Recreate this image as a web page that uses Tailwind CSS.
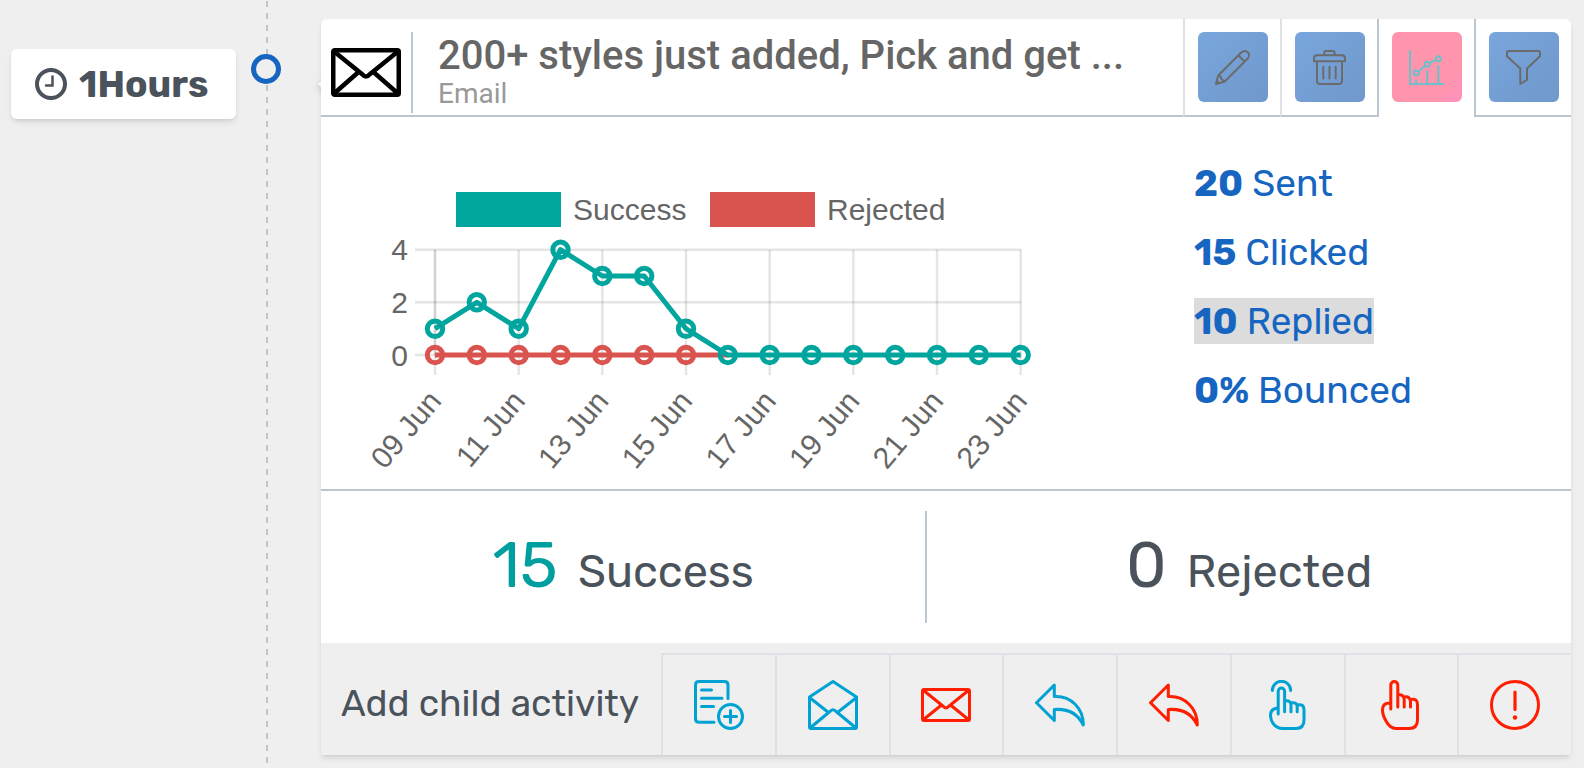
<!DOCTYPE html>
<html lang="en">
<head>
<meta charset="utf-8">
<meta name="viewport" content="width=device-width, initial-scale=1">
<title>Campaign activity</title>
<script src="https://cdn.jsdelivr.net/npm/@tailwindcss/browser@4"></script>
</head>
<body class="bg-[#efefef] font-['Rubik','Roboto',sans-serif] text-[#495057]">
<div class="flex min-h-screen items-stretch">

  <!-- Delay badge -->
  <aside class="shrink-0 pt-[49px] pl-[11px]">
    <div class="flex h-[70px] w-[225px] items-center gap-3 rounded-md bg-white pl-6 shadow-md">
      <svg class="size-8 shrink-0" viewBox="0 0 32 32" fill="none" stroke="#4a525b" aria-hidden="true">
        <circle cx="16" cy="16" r="14" stroke-width="4"/>
        <path d="M17.500 8.500V17.500H11" stroke-width="2.500" stroke-linecap="round"/>
      </svg>
      <span class="text-[37px] leading-none font-bold whitespace-nowrap text-[#4a525b]">1Hours</span>
    </div>
  </aside>

  <!-- Timeline -->
  <div class="relative ml-[15px] flex w-[30px] shrink-0 justify-center pl-0.5">
    <div class="w-0.5 bg-[repeating-linear-gradient(to_bottom,transparent_0,transparent_1px,#bcc6d0_1px,#bcc6d0_7px,transparent_7px,transparent_12px)]"></div>
    <div class="absolute top-[54px] left-0 size-[30px] rounded-full border-5 border-[#1665c1] bg-[#efefef]"></div>
  </div>

  <main class="relative mt-[19px] mr-[13px] ml-10 min-w-0 flex-1">
    <div class="absolute top-[50px] left-[3px] size-[30px] rotate-45 bg-white shadow-md"></div>
    <article class="relative rounded-t-md bg-white shadow-md">

      <!-- Header -->
      <header class="flex h-[98px]">
        <div class="flex min-w-0 flex-1 border-b-2 border-[#bcc6d0]">
          <div class="mt-[13px] flex h-[81px] w-[92px] shrink-0 items-center border-r-2 border-[#bcc6d0] pl-2.5">
            <svg class="w-[70px]" viewBox="0 0 70 49" fill="none" stroke="#000" stroke-width="4.500" stroke-linejoin="round" aria-hidden="true">
              <rect x="2.250" y="2.250" width="65.500" height="44.500" rx="1.500"/>
              <path d="M2.500 3L31.500 26.500Q35 30.500 38.500 26.500L67.500 3M2.500 46L27 24.500M67.500 46L43 24.500"/>
            </svg>
          </div>
          <div class="min-w-0 pt-3.5 pl-[25px] font-['Roboto',sans-serif]">
            <h1 class="truncate text-[40px] leading-[46px] font-medium text-[#666]">200+ styles just added, Pick and get ...</h1>
            <p class="text-[28px] leading-[30px] text-[#999]">Email</p>
          </div>
        </div>
        <nav class="flex shrink-0" aria-label="Activity actions">
          <div class="flex w-[97px] justify-center border-b-2 border-l-2 border-b-[#bcc6d0] border-l-[#dee2e6] pt-[13px]">
            <button type="button" aria-label="Edit" class="flex size-[70px] items-center justify-center rounded-md bg-linear-to-br from-[#78a6dd] to-[#7098cb]">
              <svg class="size-[35px]" viewBox="0 0 35 35" fill="none" stroke="#6b6b6b" stroke-width="2" stroke-linejoin="round">
                <path d="M1 34L3.200 25.500L25.700 3C28 .700 31 .500 32.800 2.300C34.600 4.100 34.300 7 32 9.300L9.500 31.800ZM23.300 5.300L29.700 11.700M3.200 25.500L5.500 26.500L6.500 29L9.500 31.800M2 31L4 33"/>
              </svg>
            </button>
          </div>
          <div class="flex w-[97px] justify-center border-b-2 border-l-2 border-b-[#bcc6d0] border-l-[#dee2e6] pt-[13px]">
            <button type="button" aria-label="Delete" class="flex size-[70px] items-center justify-center rounded-md bg-linear-to-br from-[#78a6dd] to-[#7098cb]">
              <svg class="size-[35px]" viewBox="0 0 35 35" fill="none" stroke="#6b6b6b" stroke-width="2" stroke-linejoin="round" stroke-linecap="round">
                <path d="M12.300 5.200V2.500Q12.300 1 13.800 1H21Q22.500 1 22.500 2.500V5.200M2 11.200V8.500Q2 5.300 5.200 5.300H29.800Q33 5.300 33 8.500V11.200ZM5 11.200V31Q5 34 8 34H27Q30 34 30 31V11.200M11.300 16.800V28.500M17.500 16.800V28.500M23.700 16.800V28.500"/>
              </svg>
            </button>
          </div>
          <div class="flex w-[97px] justify-center border-l-2 border-[#bcc6d0] pt-[13px]">
            <button type="button" aria-label="Statistics" aria-pressed="true" class="flex size-[70px] items-center justify-center rounded-md bg-linear-to-br from-[#ff95ac] from-75% to-[#ff92b9] to-90%">
              <svg class="size-[35px]" viewBox="0 0 35 35" fill="none" stroke="#6cc0ca" stroke-width="2">
                <path d="M1 0V34H35M7.300 34V29.500M18.300 34V20.500M29.300 34V15M9.500 21.500L16 15.800M20.800 12.800L26.800 9.800"/>
                <circle cx="7.300" cy="23" r="2.500"/><circle cx="18.300" cy="14.200" r="2.500"/><circle cx="29.300" cy="8.800" r="2.500"/>
              </svg>
            </button>
          </div>
          <div class="flex w-[97px] justify-center border-b-2 border-l-2 border-[#bcc6d0] pt-[13px]">
            <button type="button" aria-label="Filter" class="flex size-[70px] items-center justify-center rounded-md bg-linear-to-br from-[#78a6dd] to-[#7098cb]">
              <svg class="size-[35px]" viewBox="0 0 35 35" fill="none" stroke="#6b6b6b" stroke-width="2" stroke-linejoin="round">
                <path d="M2.500 1H32.500Q34 1 34 2.500V6.200L21 18.500V29.700L14.300 34V18.500L1 6.200V2.500Q1 1 2.500 1Z"/>
              </svg>
            </button>
          </div>
        </nav>
      </header>

      <!-- Chart and totals -->
      <section class="flex h-[374px] border-b-2 border-[#bcc6d0]">
        <div class="min-w-0 flex-1 pt-[63px] pl-[34px]">
          <svg class="w-[690px] max-w-full font-['Liberation_Sans',sans-serif]" viewBox="0 0 690 300" font-size="30" fill="#666" role="img" aria-label="Success and rejected per day, 09 Jun to 23 Jun">
            <rect x="101" y="12" width="105" height="35" fill="#00a59e"/>
            <text x="218" y="40">Success</text>
            <rect x="355" y="12" width="105" height="35" fill="#d9534f"/>
            <text x="472" y="40">Rejected</text>
            <g stroke="#000" stroke-opacity=".1" stroke-width="2.500" fill="none">
              <path d="M60 69.700H666M60 122.300H666M60 175H666"/>
              <path d="M163.700 69.700V195M247.300 69.700V195M331 69.700V195M414.700 69.700V195M498.300 69.700V195M582 69.700V195M665.700 69.700V195M80 175V195"/>
              <path d="M80 69.700V175" stroke-opacity=".18"/>
            </g>
            <g text-anchor="end">
              <text x="53" y="80">4</text>
              <text x="53" y="133">2</text>
              <text x="53" y="186">0</text>
              <text transform="translate(87.700 221.600) rotate(-50)">09 Jun</text>
              <text transform="translate(171.400 221.600) rotate(-50)">11 Jun</text>
              <text transform="translate(255 221.600) rotate(-50)">13 Jun</text>
              <text transform="translate(338.700 221.600) rotate(-50)">15 Jun</text>
              <text transform="translate(422.400 221.600) rotate(-50)">17 Jun</text>
              <text transform="translate(506 221.600) rotate(-50)">19 Jun</text>
              <text transform="translate(589.700 221.600) rotate(-50)">21 Jun</text>
              <text transform="translate(673.400 221.600) rotate(-50)">23 Jun</text>
            </g>
            <g stroke="#d9534f" stroke-width="5" fill="none">
              <path d="M80 175H372.800"/>
              <circle cx="80" cy="175" r="7.700"/><circle cx="121.800" cy="175" r="7.700"/><circle cx="163.700" cy="175" r="7.700"/><circle cx="205.500" cy="175" r="7.700"/><circle cx="247.300" cy="175" r="7.700"/><circle cx="289.200" cy="175" r="7.700"/><circle cx="331" cy="175" r="7.700"/>
            </g>
            <g stroke="#00a59e" stroke-width="5" fill="none" stroke-linejoin="round">
              <path d="M80 148.700L121.800 122.300L163.700 148.700L205.500 69.700L247.300 96L289.200 96L331 148.700L372.800 175H665.700"/>
              <circle cx="80" cy="148.700" r="7.700"/><circle cx="121.800" cy="122.300" r="7.700"/><circle cx="163.700" cy="148.700" r="7.700"/><circle cx="205.500" cy="69.700" r="7.700"/><circle cx="247.300" cy="96" r="7.700"/><circle cx="289.200" cy="96" r="7.700"/><circle cx="331" cy="148.700" r="7.700"/><circle cx="372.800" cy="175" r="7.700"/><circle cx="414.700" cy="175" r="7.700"/><circle cx="456.500" cy="175" r="7.700"/><circle cx="498.300" cy="175" r="7.700"/><circle cx="540.200" cy="175" r="7.700"/><circle cx="582" cy="175" r="7.700"/><circle cx="623.800" cy="175" r="7.700"/><circle cx="665.700" cy="175" r="7.700"/>
            </g>
          </svg>
        </div>
        <ul class="flex w-[377px] shrink-0 flex-col items-start gap-[23px] pt-[43px] text-[37px] leading-[46px] text-[#1665c1]">
          <li><a href="#sent"><b>20</b> Sent</a></li>
          <li><a href="#clicked"><b>15</b> Clicked</a></li>
          <li class="bg-[#dcdcdc]"><a href="#replied"><b>10</b> Replied</a></li>
          <li><a href="#bounced"><b>0%</b> Bounced</a></li>
        </ul>
      </section>

      <!-- Summary -->
      <section class="flex h-[152px] py-5 text-[#4a525b]">
        <div class="flex w-[48.5%] items-center justify-center border-r-2 border-[#bcc6d0]">
          <p class="flex items-baseline gap-5 pb-1"><span class="text-[64px] leading-none text-[#009f9f]">15</span><span class="text-[45px] leading-none">Success</span></p>
        </div>
        <div class="flex flex-1 items-center justify-center">
          <p class="flex items-baseline gap-5 pb-1"><span class="text-[64px] leading-none">0</span><span class="text-[45px] leading-none">Rejected</span></p>
        </div>
      </section>

      <!-- Child activities -->
      <footer class="flex h-28 bg-[#efefef] pt-2.5">
        <h2 class="flex w-[340px] shrink-0 items-center pl-5 text-[37px] whitespace-nowrap text-[#4a525b]">Add child activity</h2>
        <div class="flex min-w-0 flex-1 border-t-2 border-[#dee2e6]">
          <button type="button" aria-label="Add form" class="flex flex-1 items-center justify-center border-l-2 border-[#dee2e6] text-[#00a2d3]">
            <svg class="size-[50px]" viewBox="0 0 50 50" fill="none" stroke="currentColor" stroke-width="3" stroke-linecap="round">
              <path d="M20 42.300H5Q1.500 42.300 1.500 38.800V5Q1.500 1.500 5 1.500H30.500Q34 1.500 34 5V18.500M7.500 10H17.500M7.500 18.300H28M7.500 26.500H19.500M30.500 36.500H42.500M36.500 30.500V42.500"/>
              <circle cx="36.500" cy="36.500" r="12"/>
            </svg>
          </button>
          <button type="button" aria-label="Email opened" class="flex flex-1 items-center justify-center border-l-2 border-[#dee2e6] text-[#00a2d3]">
            <svg class="size-[50px]" viewBox="0 0 50 50" fill="none" stroke="currentColor" stroke-width="3" stroke-linejoin="round">
              <path d="M1.500 17L25 1.500L48.500 17V47Q48.500 48.500 47 48.500H3Q1.500 48.500 1.500 47ZM1.500 17.500L20.500 32.500M48.500 17.500L29.500 32.500M2 48L22.500 31Q25 28.500 27.500 31L48 48"/>
            </svg>
          </button>
          <button type="button" aria-label="Email not opened" class="flex flex-1 items-center justify-center border-l-2 border-[#dee2e6] text-[#ff1e00]">
            <svg class="size-[50px]" viewBox="0 0 50 50" fill="none" stroke="currentColor" stroke-width="3" stroke-linejoin="round">
              <rect x="1.500" y="9.500" width="47" height="31" rx="1.500"/>
              <path d="M2 10L22.500 26.500Q25 29.500 27.500 26.500L48 10M2 40L20.500 25M48 40L29.500 25"/>
            </svg>
          </button>
          <button type="button" aria-label="Replied" class="flex flex-1 items-center justify-center border-l-2 border-[#dee2e6] text-[#00a2d3]">
            <svg class="size-[50px]" viewBox="0 0 50 50" fill="none" stroke="currentColor" stroke-width="3" stroke-linejoin="round">
              <path d="M1.500 22.700L19.300 5V16.500C36 15.500 48.500 28.500 48.300 45C43 34 33 28.500 19.300 29.500V40.500Z"/>
            </svg>
          </button>
          <button type="button" aria-label="Not replied" class="flex flex-1 items-center justify-center border-l-2 border-[#dee2e6] text-[#ff1e00]">
            <svg class="size-[50px]" viewBox="0 0 50 50" fill="none" stroke="currentColor" stroke-width="3" stroke-linejoin="round">
              <path d="M1.500 22.700L19.300 5V16.500C36 15.500 48.500 28.500 48.300 45C43 34 33 28.500 19.300 29.500V40.500Z"/>
            </svg>
          </button>
          <button type="button" aria-label="Clicked" class="flex flex-1 items-center justify-center border-l-2 border-[#dee2e6] text-[#00a2d3]">
            <svg class="size-[50px]" viewBox="0 0 50 50" fill="none" stroke="currentColor" stroke-width="3" stroke-linecap="round" stroke-linejoin="round">
              <path d="M9.300 10.500A9.200 9.200 0 0 1 27.700 10.500M15.200 34V11.300A3.200 3.200 0 0 1 21.600 11.300V31.800M21.600 20.800Q28 20 28 25V31.800M28 22.800Q34.200 21.800 34.200 27V31.800M34.200 25Q41 23.500 41 29.500V40Q41 48.500 33 48.500H20Q14 48.500 10.500 44Q7.500 40.500 7.500 35.500Q7.500 28.500 15 28"/>
            </svg>
          </button>
          <button type="button" aria-label="Not clicked" class="flex flex-1 items-center justify-center border-l-2 border-[#dee2e6] text-[#ff1e00]">
            <svg class="size-[50px]" viewBox="0 0 50 50" fill="none" stroke="currentColor" stroke-width="3" stroke-linecap="round" stroke-linejoin="round">
              <path d="M14.800 29V5A3.500 3.500 0 0 1 21.800 5V27M21.800 15Q28.200 14 28.200 20V27M28.200 17Q34.500 16 34.500 22V27M34.500 19.500Q41.500 18 41.500 24.500V40Q41.500 48.500 33 48.500H20Q14 48.500 10 41Q6.500 35 6.500 30Q6.500 22.500 14.500 23"/>
            </svg>
          </button>
          <button type="button" aria-label="Bounced" class="flex flex-1 items-center justify-center border-l-2 border-[#dee2e6] text-[#ff1e00]">
            <svg class="size-[50px]" viewBox="0 0 50 50" fill="none" stroke="currentColor" stroke-width="3" stroke-linecap="round">
              <circle cx="25" cy="25" r="23.500"/>
              <path d="M25 12V29.500" stroke-width="3.200"/>
              <circle cx="25" cy="37.500" r="2.200" fill="currentColor" stroke="none"/>
            </svg>
          </button>
        </div>
      </footer>
    </article>
  </main>
</div>
</body>
</html>
